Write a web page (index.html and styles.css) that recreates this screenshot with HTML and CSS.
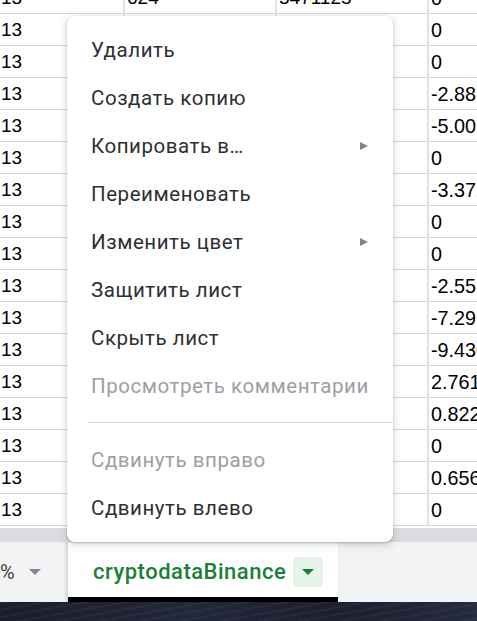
FILE: index.html
```html
<!DOCTYPE html>
<html lang="ru">
<head>
    <meta charset="UTF-8">
    <meta name="viewport" content="width=device-width, initial-scale=1.0">
    <title>cryptodataBinance</title>
    <link rel="stylesheet" href="styles.css">
</head>
<body>
    <div class="window">
        <div class="sheet">
            <table class="grid">
                <colgroup>
                    <col class="col-a">
                    <col class="col-b">
                    <col class="col-c">
                    <col class="col-d">
                </colgroup>
                <tr><td>13</td><td>624</td><td>5471125</td><td>0</td></tr>
                <tr><td>13</td><td></td><td></td><td>0</td></tr>
                <tr><td>13</td><td></td><td></td><td>0</td></tr>
                <tr><td>13</td><td></td><td></td><td>-2.8814</td></tr>
                <tr><td>13</td><td></td><td></td><td>-5.0032</td></tr>
                <tr><td>13</td><td></td><td></td><td>0</td></tr>
                <tr><td>13</td><td></td><td></td><td>-3.3721</td></tr>
                <tr><td>13</td><td></td><td></td><td>0</td></tr>
                <tr><td>13</td><td></td><td></td><td>0</td></tr>
                <tr><td>13</td><td></td><td></td><td>-2.5510</td></tr>
                <tr><td>13</td><td></td><td></td><td>-7.2934</td></tr>
                <tr><td>13</td><td></td><td></td><td>-9.4308</td></tr>
                <tr><td>13</td><td></td><td></td><td>2.7611</td></tr>
                <tr><td>13</td><td></td><td></td><td>0.8224</td></tr>
                <tr><td>13</td><td></td><td></td><td>0</td></tr>
                <tr><td>13</td><td></td><td></td><td>0.6563</td></tr>
                <tr><td>13</td><td></td><td></td><td>0</td></tr>
            </table>
        </div>

        <div class="hscroll"></div>

        <div class="tabbar">
            <div class="zoom">
                <span>%</span>
                <span class="caret"></span>
            </div>
            <div class="tab">
                <span class="tab-name">cryptodataBinance</span>
                <span class="tab-menu"><span class="tab-caret"></span></span>
            </div>
        </div>

        <!-- контекстное меню листа -->
        <div class="menu">
            <div class="item">Удалить</div>
            <div class="item">Создать копию</div>
            <div class="item">Копировать в…<span class="arrow"></span></div>
            <div class="item">Переименовать</div>
            <div class="item">Изменить цвет<span class="arrow"></span></div>
            <div class="item">Защитить лист</div>
            <div class="item">Скрыть лист</div>
            <div class="item disabled">Просмотреть комментарии</div>
            <div class="separator"></div>
            <div class="item disabled">Сдвинуть вправо</div>
            <div class="item">Сдвинуть влево</div>
        </div>
    </div>
    <div class="desktop"></div>
</body>
</html>
```

FILE: styles.css
```css
html, body {
    margin: 0;
    padding: 0;
}
body {
    width: 477px;
    height: 621px;
    overflow: hidden;
    background: #1c2030;
    font-family: Roboto, Arial, sans-serif;
}
.window {
    position: relative;
    height: 602px;
    background: #f1f3f4;
}
.sheet {
    height: 528px;
    overflow: hidden;
    background: #fff;
}
.grid {
    border-collapse: collapse;
    table-layout: fixed;
    width: 600px;
    margin-top: -18px;
    font-family: "Liberation Sans", Arial, sans-serif;
    font-size: 19px;
    color: #000;
}
.col-a { width: 124px; }
.col-b, .col-c { width: 152px; }
.col-d { width: 172px; }
.grid td {
    height: 31px;
    padding: 1px 0 0 2px;
    line-height: 30px;
    white-space: nowrap;
    overflow: hidden;
    border-right: 2px solid #e2e2e2;
    border-bottom: 1px solid #d6d6d6;
    box-sizing: border-box;
}
.grid td:first-child { padding-left: 1px; }
.grid td:last-child { font-size: 19.8px; }
.hscroll {
    height: 14px;
    background: #dadce0;
}
.tabbar {
    display: flex;
    height: 60px;
}
.zoom {
    width: 68px;
    display: flex;
    align-items: center;
    gap: 14px;
    font-size: 20px;
    color: #3c4043;
    box-shadow: inset -4px 0 4px -3px rgba(60, 64, 67, 0.25);
}
.caret {
    width: 0;
    height: 0;
    border-left: 6.5px solid transparent;
    border-right: 6.5px solid transparent;
    border-top: 6px solid #80868b;
}
.tab {
    width: 270px;
    display: flex;
    align-items: center;
    background: #fff;
    border-bottom: 5px solid #000;
    box-sizing: border-box;
    padding: 0 15px 0 25px;
    justify-content: space-between;
}
.tab-name {
    font-size: 22px;
    font-weight: 500;
    letter-spacing: 0.5px;
    color: #188038;
    margin-top: 3px;
}
.tab-menu {
    width: 30px;
    height: 30px;
    border-radius: 4px;
    background: #e6f4ea;
    display: flex;
    align-items: center;
    justify-content: center;
    margin-top: 5px;
}
.tab-caret {
    width: 0;
    height: 0;
    border-left: 6px solid transparent;
    border-right: 6px solid transparent;
    border-top: 6px solid #188038;
}
.menu {
    position: absolute;
    left: 67px;
    top: 16px;
    width: 326px;
    padding: 10px 0;
    background: #fff;
    border-radius: 8px;
    box-shadow: 0 1px 2px rgba(60, 64, 67, 0.3), 0 2px 6px 2px rgba(60, 64, 67, 0.15);
}
.item {
    position: relative;
    height: 48px;
    line-height: 48px;
    padding-left: 24px;
    font-size: 20.5px;
    letter-spacing: 0.55px;
    color: #2e2f32;
    white-space: nowrap;
}
.item.disabled {
    color: #9aa0a6;
}
.arrow {
    position: absolute;
    right: 25px;
    top: 20px;
    width: 0;
    height: 0;
    border-top: 4px solid transparent;
    border-bottom: 4px solid transparent;
    border-left: 8px solid #80868b;
}
.separator {
    height: 1px;
    margin: 12px 0 13px 21px;
    background: #dadce0;
}
.desktop {
    height: 19px;
    background:
        repeating-linear-gradient(170deg, rgba(255, 255, 255, 0.04) 0 2px, transparent 2px 7px),
        linear-gradient(90deg, #1a1d2b, #22273a 40%, #1b1f2f 70%, #252a3d);
}
```
